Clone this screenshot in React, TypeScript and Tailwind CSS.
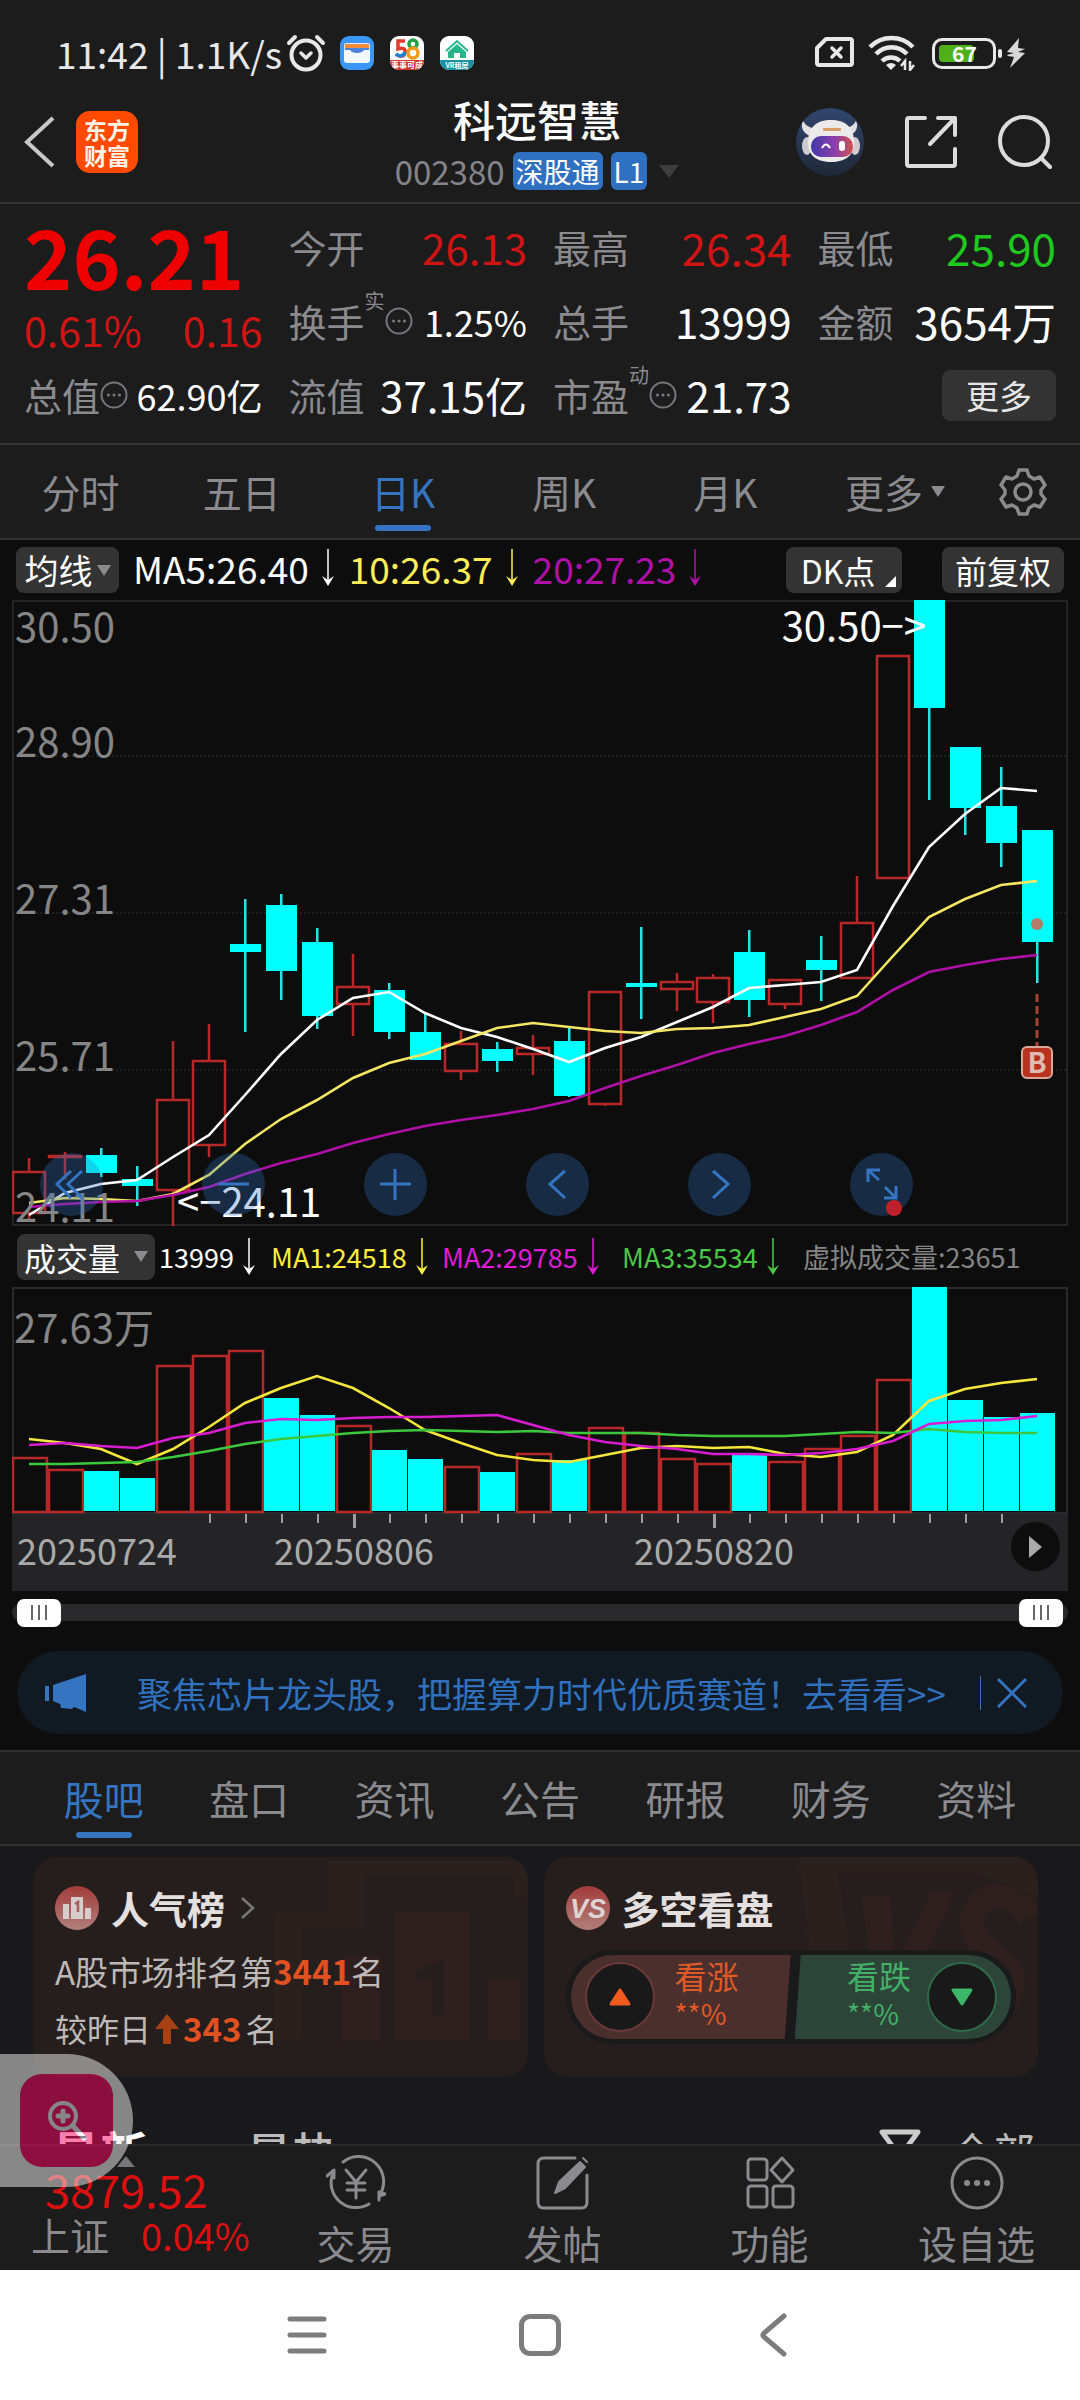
import type { ReactNode } from "react";

type Candle = [high: number, top: number, bottom: number, low: number, up: 0 | 1];

const STEP = 36;

const candles: Candle[] = [
  [558, 572, 613, 620, 1],
  [552, 556, 557, 579, 1],
  [548, 555, 573, 577, 0],
  [566, 579, 586, 606, 0],
  [441, 500, 590, 627, 1],
  [424, 461, 545, 557, 1],
  [299, 344, 352, 432, 0],
  [294, 305, 371, 400, 0],
  [328, 342, 416, 429, 0],
  [354, 387, 404, 436, 1],
  [383, 390, 432, 439, 0],
  [413, 432, 460, 460, 0],
  [431, 444, 471, 480, 1],
  [442, 449, 461, 472, 0],
  [435, 448, 454, 475, 1],
  [428, 441, 496, 497, 0],
  [392, 392, 504, 506, 1],
  [327, 383, 387, 419, 0],
  [373, 382, 389, 411, 1],
  [374, 378, 402, 423, 1],
  [330, 352, 400, 417, 0],
  [380, 380, 404, 409, 1],
  [336, 360, 370, 401, 0],
  [276, 323, 378, 378, 1],
  [56, 56, 278, 278, 1],
  [0, 0, 108, 200, 0],
  [147, 147, 208, 235, 0],
  [167, 206, 243, 267, 0],
  [230, 230, 342, 383, 0],
];

const ma5 = [615, 593, 584, 580, 557, 535, 495, 454, 420, 398, 392, 413, 428, 437, 449, 462, 448, 437, 422, 407, 388, 385, 382, 370, 306, 247, 214, 188, 191];
const ma10 = [603, 598, 599, 601, 594, 575, 544, 519, 500, 478, 463, 454, 441, 428, 423, 427, 431, 433, 429, 428, 425, 417, 409, 396, 356, 317, 299, 285, 281];
const ma20 = [607, 604, 602, 601, 595, 587, 574, 563, 554, 543, 534, 526, 520, 515, 509, 501, 488, 476, 465, 453, 444, 436, 425, 412, 390, 372, 365, 359, 355];

const volumeTops = [170, 182, 184, 191, 78, 68, 63, 111, 128, 138, 163, 172, 179, 185, 166, 173, 140, 145, 171, 176, 168, 174, 161, 148, 92, 0, 113, 130, 126];
const vma1 = [152, 156, 162, 177, 162, 140, 116, 101, 89, 101, 121, 143, 156, 168, 173, 175, 168, 161, 159, 161, 160, 167, 170, 165, 148, 114, 102, 96, 92];
const vma2 = [158, 156, 159, 161, 151, 146, 136, 132, 133, 131, 130, 130, 129, 128, 138, 148, 155, 159, 162, 167, 167, 168, 166, 162, 154, 137, 134, 133, 129];
const vma3 = [177, 177, 176, 175, 170, 164, 157, 152, 149, 146, 144, 143, 144, 145, 144, 146, 146, 146, 148, 149, 149, 149, 147, 145, 146, 142, 145, 146, 146];

// closed above the day before, although the candle itself fell
const gapUpDays = [6, 17, 22];

const center = (i: number) => 17 + i * STEP;
const toPoints = (values: number[]) => values.map((y, i) => `${center(i)},${y}`).join(" ");
const isUpVolume = (i: number) => candles[i][4] === 1 || gapUpDays.includes(i);

const StatusBar = () => (
  <div className="flex h-[94px] items-center justify-between pt-3 pl-[56px] pr-[54px]">
    <div className="flex items-center">
      <span className="text-[37px] leading-none text-[#e8e8e8]">11:42 | 1.1K/s</span>
      <svg viewBox="0 0 40 38" className="ml-1 h-[38px] w-10" fill="none" stroke="#e8e8e8" strokeWidth="4" strokeLinecap="round">
        <circle cx="20" cy="21" r="14.5" />
        <path d="M15 19l5 5 5-5" strokeLinejoin="round" strokeWidth="3.5" />
        <path d="M3 9l6-6M37 9l-6-6" />
      </svg>
      <svg viewBox="0 0 34 34" className="ml-[14px] size-[34px]">
        <rect width="34" height="34" rx="9" fill="#3a97f5" />
        <rect x="4" y="7" width="26" height="10" rx="2" fill="#d9e6f5" />
        <rect x="5" y="8" width="24" height="4" fill="#f08c3c" />
        <path d="M4 14h6c2 4 12 4 14 0h6v10a3 3 0 0 1-3 3H7a3 3 0 0 1-3-3z" fill="#f4f8ff" />
        <path d="M5 12h24v2h-5c-2 4-12 4-14 0H5z" fill="#4a83d8" />
      </svg>
      <svg viewBox="0 0 34 34" className="ml-4 size-[34px]">
        <clipPath id="r58"><rect width="34" height="34" rx="9" /></clipPath>
        <g clipPath="url(#r58)">
          <rect width="34" height="34" fill="#fff" />
          <path d="M15 5H8v8c5-2 8 0 7 4s-6 4-9 1" fill="none" stroke="#e23a2e" strokeWidth="3.5" />
          <path d="M6 18c3 3 8 2 9-2" fill="none" stroke="#1d82d2" strokeWidth="3.5" />
          <circle cx="23" cy="8" r="4" fill="none" stroke="#25a045" strokeWidth="3.5" />
          <circle cx="23" cy="17" r="5" fill="none" stroke="#f39a1e" strokeWidth="3.5" />
          <rect y="24" width="34" height="10" fill="#d8352b" />
          <text x="17" y="32" textAnchor="middle" fontSize="8" fontWeight="700" fill="#fff">事事可成</text>
        </g>
      </svg>
      <svg viewBox="0 0 34 34" className="ml-4 size-[34px]">
        <clipPath id="rvr"><rect width="34" height="34" rx="9" /></clipPath>
        <g clipPath="url(#rvr)">
          <rect width="34" height="34" fill="#fff" />
          <path d="M6 15L17 5l11 10" fill="none" stroke="#27b589" strokeWidth="2" />
          <path d="M17 8l9 8v6h-6v-5h-6v5H8v-6z" fill="#27b589" />
          <path d="M0 24h34v10H0z" fill="#1a92a5" />
          <text x="17" y="32" textAnchor="middle" fontSize="7" fontWeight="700" fill="#fff">VR租房</text>
        </g>
      </svg>
    </div>
    <div className="flex items-center">
      <svg viewBox="0 0 42 34" className="h-[34px] w-[42px]" fill="none" stroke="#e8e8e8" strokeWidth="4" strokeLinejoin="round">
        <path d="M12 3h24q2 0 2 2v22q0 2-2 2H5q-2 0-2-2V12z" />
        <path d="M18 12l9 9M27 12l-9 9" strokeLinecap="round" strokeWidth="3.5" />
      </svg>
      <svg viewBox="0 0 48 36" className="ml-3 h-9 w-12" fill="none" stroke="#e8e8e8" strokeWidth="4.5">
        <path d="M2 12a30 30 0 0 1 43 0M8 19a21 21 0 0 1 31 0M14 26a13 13 0 0 1 18 0" />
        <path d="M18 30a8 8 0 0 1 10 0l-5 5z" fill="#e8e8e8" stroke="none" />
        <path d="M37 35v-9l-4 5M42 26v9l4-5" strokeWidth="2.5" />
      </svg>
      <div className="ml-4 flex h-[31px] w-16 items-center rounded-[10px] border-[3px] border-[#e8e8e8] p-1">
        <div className="flex h-full w-[35px] items-center justify-center rounded-[4px] bg-[#4fb01a] pl-4 text-[21px] leading-none font-bold text-white">67</div>
      </div>
      <div className="ml-[2px] h-[9px] w-1 rounded-full bg-[#e8e8e8]" />
      <svg viewBox="0 0 20 30" className="ml-1 h-[30px] w-5" fill="#d8d8d8">
        <path d="M13 0L1 14l7 1-7 2 1 1 6 1-4 11L19 15l-7-1 7-3-7-1z" />
      </svg>
    </div>
  </div>
);

const Header = () => (
  <header className="grid h-[110px] grid-cols-[1fr_auto_1fr] items-center border-b-2 border-[#333] pl-[22px] pr-7">
    <div className="flex items-center gap-5 pb-3">
      <button aria-label="返回">
        <svg viewBox="0 0 34 52" className="h-[52px] w-[34px]" fill="none" stroke="#c8c8c8" strokeWidth="4">
          <path d="M31 2L5 26l26 24" />
        </svg>
      </button>
      <a href="#home" className="flex size-[62px] flex-col items-center justify-center rounded-[14px] bg-[#ff4a00] text-[23px] leading-[26px] font-bold text-[#fff3e8]">
        <span>东方</span>
        <span>财富</span>
      </a>
    </div>
    <div className="flex flex-col items-center gap-2 pb-3">
      <h1 className="text-[42px] leading-[50px] font-medium text-white">科远智慧</h1>
      <div className="flex items-center gap-2 leading-[38px]">
        <span className="text-[33px] text-[#84848a]">002380</span>
        <span className="rounded-[6px] bg-[#3070c0] px-[3px] text-[28px] text-white">深股通</span>
        <span className="rounded-[6px] bg-[#3070c0] px-[3px] text-[28px] text-white">L1</span>
        <span className="ml-1 h-0 w-0 border-x-[10px] border-t-[13px] border-x-transparent border-t-[#3d3d3d]" />
      </div>
    </div>
    <div className="flex items-center justify-end gap-10 pb-3">
      <button aria-label="助手">
        <svg viewBox="0 0 68 68" className="size-[68px]">
          <defs>
            <linearGradient id="face" x1="0" x2="1">
              <stop offset="0" stopColor="#4238a8" />
              <stop offset="0.55" stopColor="#8a3fae" />
              <stop offset="1" stopColor="#d2504e" />
            </linearGradient>
            <linearGradient id="sky" x1="0" x2="0" y1="0" y2="1">
              <stop offset="0" stopColor="#31466e" />
              <stop offset="1" stopColor="#1f2838" />
            </linearGradient>
          </defs>
          <circle cx="34" cy="34" r="34" fill="url(#sky)" />
          <path d="M7 13c-3 6 0 12 7 15l8-8c-7 1-12-2-15-7zM60 13c3 6 0 12-7 15l-8-8c7 1 12-2 15-7z" fill="#e3e0e2" />
          <ellipse cx="11" cy="38" rx="5" ry="9" fill="#cfcbd0" />
          <ellipse cx="59" cy="38" rx="5" ry="9" fill="#cfcbd0" />
          <path d="M12 34c0-15 9-22 23-22s23 7 23 22c0 14-9 20-23 20s-23-6-23-20z" fill="#ece9ea" />
          <rect x="27" y="20" width="18" height="3" rx="1" fill="#d99c6c" />
          <rect x="15" y="28" width="42" height="21" rx="10" fill="url(#face)" />
          <path d="M26 40q4-7 8 0" fill="none" stroke="#fff" strokeWidth="2" />
          <rect x="43" y="33" width="6" height="10" rx="3" fill="#fff" />
        </svg>
      </button>
      <button aria-label="分享">
        <svg viewBox="0 0 54 54" className="size-[54px]" fill="none" stroke="#dcdcdc" strokeWidth="4" strokeLinecap="round" strokeLinejoin="round">
          <path d="M21 3H5q-2 0-2 2v44q0 2 2 2h44q2 0 2-2V34" />
          <path d="M34 3h17v17M51 3L26 29" />
        </svg>
      </button>
      <button aria-label="搜索">
        <svg viewBox="0 0 54 54" className="size-[54px]" fill="none" stroke="#dcdcdc" strokeWidth="4" strokeLinecap="round">
          <circle cx="26" cy="26" r="24" />
          <path d="M43 43l9 9" />
        </svg>
      </button>
    </div>
  </header>
);

const InfoDots = () => (
  <svg viewBox="0 0 28 28" className="size-7 shrink-0" fill="#77777b">
    <circle cx="14" cy="14" r="12.5" fill="none" stroke="#77777b" strokeWidth="2" />
    <circle cx="8.5" cy="14" r="1.6" />
    <circle cx="14" cy="14" r="1.6" />
    <circle cx="19.5" cy="14" r="1.6" />
  </svg>
);

type StatProps = {
  label: string;
  note?: string;
  info?: boolean;
  value: string;
  tone?: string;
  size?: string;
};

const Stat = ({ label, note, info, value, tone = "text-white", size = "text-[42px]" }: StatProps) => (
  <div className="flex h-[74px] items-center justify-between whitespace-nowrap leading-none">
    <span className="flex items-center text-[38px] text-[#8a8a8f]">
      {label}
      {note && <sup className="relative -top-5 text-[20px] leading-none">{note}</sup>}
      {info && <InfoDots />}
    </span>
    <span className={`${size} ${tone}`}>{value}</span>
  </div>
);

const Quote = () => (
  <section className="grid h-[241px] grid-cols-4 grid-rows-[74px_74px_74px] gap-x-[26px] border-b-2 border-[#333] px-6 pt-[6px]">
    <div className="row-span-2 flex flex-col">
      <div className="flex h-[90px] items-center text-[82px] leading-none font-bold text-[#ee0000]">26.21</div>
      <div className="flex h-[58px] items-center justify-between text-[41px] leading-none text-[#d01414]">
        <span>0.61%</span>
        <span>0.16</span>
      </div>
    </div>
    <Stat label="今开" value="26.13" tone="text-[#d01414]" />
    <Stat label="最高" value="26.34" tone="text-[#d01414]" size="text-[44px]" />
    <Stat label="最低" value="25.90" tone="text-[#1fc81f]" size="text-[44px]" />
    <Stat label="换手" note="实" info value="1.25%" size="text-[36px]" />
    <Stat label="总手" value="13999" />
    <Stat label="金额" value="3654万" size="text-[44px]" />
    <Stat label="总值" info value="62.90亿" size="text-[36px]" />
    <Stat label="流值" value="37.15亿" />
    <Stat label="市盈" note="动" info value="21.73" />
    <div className="flex h-[74px] items-center justify-end">
      <button className="h-[51px] w-[114px] rounded-lg bg-[#333] text-[33px] leading-none text-[#e6e6e6]">更多</button>
    </div>
  </section>
);

const periods = ["分时", "五日", "日K", "周K", "月K"];

const PeriodTabs = () => (
  <nav className="flex h-[95px] items-center border-b-2 border-[#333] pr-[18px] text-[39px] leading-none text-[#8a8a8f]">
    {periods.map((name) => (
      <button key={name} className={name === "日K" ? "relative h-full flex-1 text-[#3474c0]" : "relative h-full flex-1"}>
        {name}
        {name === "日K" && <span className="absolute bottom-[7px] left-1/2 h-[6px] w-14 -translate-x-1/2 rounded-full bg-[#3474c0]" />}
      </button>
    ))}
    <button className="flex h-full w-[178px] items-center justify-center gap-2">
      更多
      <span className="h-0 w-0 border-x-[7px] border-t-[11px] border-x-transparent border-t-[#8a8a8f]" />
    </button>
    <button aria-label="设置" className="flex h-full w-[78px] items-center justify-center">
      <svg viewBox="0 0 48 48" className="size-12" fill="none" stroke="#8a8a8f" strokeWidth="3.5" strokeLinejoin="round">
        <path d="M20 2h8l2 6 5 3 6-2 5 8-4 5v4l4 5-5 8-6-2-5 3-2 6h-8l-2-6-5-3-6 2-5-8 4-5v-4l-4-5 5-8 6 2 5-3z" />
        <circle cx="24" cy="24" r="8" />
      </svg>
    </button>
  </nav>
);

const DownArrow = () => (
  <svg viewBox="0 0 14 38" className="h-[38px] w-[14px] shrink-0">
    <path d="M7 0v32" stroke="currentColor" strokeWidth="1.5" fill="none" />
    <path d="M1 27l6 10 6-10-6 4z" fill="currentColor" />
  </svg>
);

const MaBar = () => (
  <div className="flex h-[60px] items-center justify-between px-4 text-[34px] leading-none whitespace-nowrap text-white">
    <div className="flex items-center gap-[14px]">
      <button className="flex h-[46px] w-[103px] items-center justify-center gap-1 rounded-lg bg-[#333]">
        均线
        <span className="h-0 w-0 border-x-[7px] border-t-[11px] border-x-transparent border-t-[#8a8a8f]" />
      </button>
      <span className="flex items-center gap-3 pb-1 text-[37px]">MA5:26.40<DownArrow /></span>
      <span className="flex items-center gap-3 pb-1 text-[37px] text-[#ffee58]">10:26.37<DownArrow /></span>
      <span className="flex items-center gap-3 pb-1 text-[37px] text-[#b010a8]">20:27.23<DownArrow /></span>
    </div>
    <div className="flex items-center gap-10">
      <button className="relative h-[46px] w-[116px] rounded-lg bg-[#333] pr-3 text-[32px]">
        DK点
        <span className="absolute right-[6px] bottom-[6px] h-0 w-0 border-b-[11px] border-l-[11px] border-b-white border-l-transparent" />
      </button>
      <button className="h-[46px] w-[122px] rounded-lg bg-[#333] text-[32px]">前复权</button>
    </div>
  </div>
);

const RoundButton = ({ label, children }: { label: string; children: ReactNode }) => (
  <button aria-label={label} className="relative size-[63px] rounded-full bg-[#2e74c4]/30">
    <svg viewBox="0 0 63 63" className="size-full" fill="none" stroke="#3474c0" strokeWidth="3">
      {children}
    </svg>
  </button>
);

const PriceChart = () => (
  <div className="relative mx-3">
    <svg viewBox="0 0 1056 626" className="block w-full" fontSize="40">
      <path d="M1 1V625H1055V1z" fill="none" stroke="#242424" strokeWidth="2" />
      <path d="M0 156H1055M0 313H1055M0 470H1055" stroke="#333" strokeWidth="1" strokeDasharray="2 2" />
      {candles.map(([high, top, bottom, low, up], i) =>
        up ? (
          <g key={i} stroke="#b82828" strokeWidth="2.5" fill="none">
            <path d={`M${center(i)} ${high}V${top}M${center(i)} ${bottom}V${low}`} />
            <rect x={center(i) - 16} y={top} width="32" height={bottom - top} />
          </g>
        ) : (
          <g key={i} fill="#00ffff">
            <rect x={center(i) - 1} y={high} width="2.5" height={low - high} fill="#28e4e4" />
            <rect x={center(i) - 15} y={top} width="31" height={bottom - top} />
          </g>
        )
      )}
      <g fill="none" strokeWidth="2.6">
        <polyline points={toPoints(ma5)} stroke="#fff" />
        <polyline points={toPoints(ma10)} stroke="#f5e663" />
        <polyline points={toPoints(ma20)} stroke="#b010a8" />
      </g>
      <g fill="#858585">
        <text x="3" y="42">30.50</text>
        <text x="3" y="157">28.90</text>
        <text x="3" y="314">27.31</text>
        <text x="3" y="471">25.71</text>
        <text x="3" y="622">24.11</text>
      </g>
      <g fill="#fff">
        <text x="165" y="617">&lt;−24.11</text>
        <text x="914" y="41" textAnchor="end">30.50−&gt;</text>
      </g>
      <circle cx="1025" cy="324" r="6" fill="#b57a68" />
      <path d="M1025 394V446" stroke="#a84030" strokeWidth="3" strokeDasharray="8 4" />
      <rect x="1010" y="447" width="30" height="31" rx="5" fill="#b83220" stroke="#dba898" strokeWidth="2" />
      <text x="1025" y="473" textAnchor="middle" fontSize="28" fontWeight="700" fill="#e0bab0">B</text>
    </svg>
    <div className="absolute bottom-[10px] left-7 flex w-[873px] justify-between">
      <RoundButton label="最左"><path d="M31 18L17 31l14 14M42 18L28 31l14 14" /></RoundButton>
      <RoundButton label="缩小"><path d="M16 31h31" /></RoundButton>
      <RoundButton label="放大"><path d="M16 31h31M31 16v31" /></RoundButton>
      <RoundButton label="左移"><path d="M39 18L24 31l15 14" /></RoundButton>
      <RoundButton label="右移"><path d="M25 18l15 13-15 14" /></RoundButton>
      <RoundButton label="全屏">
        <path d="M30 17H18v12M18 17l11 10M34 45h12V33M46 45L35 34" />
        <circle cx="44" cy="55" r="8" fill="#c0202c" stroke="none" />
      </RoundButton>
    </div>
  </div>
);

const VolumeBar = () => (
  <div className="flex h-[61px] items-center pl-[17px] text-[27px] leading-none whitespace-nowrap">
    <button className="flex h-[46px] w-[138px] items-center justify-center gap-[14px] rounded-lg bg-[#333] text-[32px] text-white">
      成交量
      <span className="h-0 w-0 border-x-[7px] border-t-[11px] border-x-transparent border-t-[#8a8a8f]" />
    </button>
    <span className="ml-1 flex w-[112px] items-center gap-2 text-white">13999<DownArrow /></span>
    <span className="flex w-[171px] items-center gap-2 text-[#ffee3c]">MA1:24518<DownArrow /></span>
    <span className="flex w-[180px] items-center gap-2 text-[#e01cd8]">MA2:29785<DownArrow /></span>
    <span className="flex w-[181px] items-center gap-2 text-[#4cc848]">MA3:35534<DownArrow /></span>
    <span className="text-[#858585]">虚拟成交量:23651</span>
  </div>
);

const VolumeChart = () => (
  <div className="relative mx-3">
    <svg viewBox="0 0 1056 304" className="block w-full">
      <path d="M1 1H1055V226H1z" fill="none" stroke="#2a2a2a" strokeWidth="2" />
      {volumeTops.map((top, i) =>
        isUpVolume(i) ? (
          <rect key={i} x={STEP * i + 1} y={top + 1} width="34" height={224 - top} fill="none" stroke="#b82828" strokeWidth="2.5" />
        ) : (
          <rect key={i} x={STEP * i} y={top} width="35" height={224 - top} fill="#00ffff" />
        )
      )}
      <g fill="none" strokeWidth="2.6">
        <polyline points={toPoints(vma1)} stroke="#f5e63c" />
        <polyline points={toPoints(vma3)} stroke="#3cc83c" />
        <polyline points={toPoints(vma2)} stroke="#d81cd0" />
      </g>
      <text x="2" y="56" fontSize="40" fill="#858585">27.63万</text>
      <rect y="227" width="1056" height="77" fill="#242426" />
      {candles.map((_, i) =>
        i < 5 || i > 27 ? null : (
          <rect key={i} x={center(i)} y="227" width={i === 9 || i === 19 ? 3 : 2} height={i === 9 || i === 19 ? 14 : 9} fill="#a0a0a0" />
        )
      )}
      <g fontSize="36" fill="#aaa">
        <text x="5" y="278">20250724</text>
        <text x="342" y="278" textAnchor="middle">20250806</text>
        <text x="702" y="278" textAnchor="middle">20250820</text>
      </g>
    </svg>
    <button aria-label="播放" className="absolute right-2 bottom-5 flex size-[49px] items-center justify-center rounded-full bg-[#0d0d0d]">
      <span className="h-0 w-0 border-y-[11px] border-l-[13px] border-y-transparent border-l-[#aaa]" />
    </button>
  </div>
);

const thumbClass =
  "pointer-events-none absolute inset-x-[5px] top-1/2 h-7 -translate-y-1/2 appearance-none bg-transparent [&::-webkit-slider-thumb]:pointer-events-auto [&::-webkit-slider-thumb]:h-7 [&::-webkit-slider-thumb]:w-11 [&::-webkit-slider-thumb]:appearance-none [&::-webkit-slider-thumb]:rounded-[7px] [&::-webkit-slider-thumb]:bg-white [&::-webkit-slider-thumb]:bg-[repeating-linear-gradient(90deg,#666_0_2px,#fff_2px_7px)] [&::-webkit-slider-thumb]:bg-[length:16px_15px] [&::-webkit-slider-thumb]:bg-center [&::-webkit-slider-thumb]:bg-no-repeat";

const RangeBar = () => (
  <div className="px-3 pt-[13px] pb-[30px]">
    <div className="relative h-[17px] rounded-full bg-[#2a2a2c]">
      <input type="range" aria-label="起始日期" defaultValue={0} className={thumbClass} />
      <input type="range" aria-label="结束日期" defaultValue={100} className={thumbClass} />
    </div>
  </div>
);

const Banner = () => (
  <div className="mx-[17px] mb-4 flex h-[83px] items-center rounded-full bg-[#111922] pl-7 pr-9 text-[#3070bc]">
    <svg viewBox="0 0 42 38" className="h-[38px] w-[42px] shrink-0" fill="#3474c0">
      <path d="M0 12h4v15H0zM8 11L41 0v38l-12-5-2 2-11-1-1-4-7-3z" />
    </svg>
    <a href="#promo" className="ml-[50px] text-[35px] leading-none whitespace-nowrap">聚焦芯片龙头股，把握算力时代优质赛道！去看看&gt;&gt;</a>
    <span className="ml-auto h-[34px] w-px bg-[#3070bc]" />
    <button aria-label="关闭" className="ml-4">
      <svg viewBox="0 0 30 30" className="size-[30px]" fill="none" stroke="#3474c0" strokeWidth="3">
        <path d="M1 1l28 28M29 1L1 29" />
      </svg>
    </button>
  </div>
);

const sections = ["股吧", "盘口", "资讯", "公告", "研报", "财务", "资料"];

const SectionTabs = () => (
  <nav className="grid h-24 grid-cols-7 border-y-2 border-[#303030] bg-[#1c1c1c] px-[31px] text-[40px] leading-none text-[#8a8a8f]">
    {sections.map((name) => (
      <button key={name} className={name === "股吧" ? "relative text-[#3474c0]" : "relative"}>
        {name}
        {name === "股吧" && <span className="absolute bottom-[6px] left-1/2 h-[6px] w-14 -translate-x-1/2 rounded-full bg-[#3474c0]" />}
      </button>
    ))}
  </nav>
);

const RankCard = () => (
  <div className="relative h-[220px] overflow-hidden rounded-[24px] bg-[#261e1d] pt-6 pl-[22px] text-[#bdb9b8]">
    <svg viewBox="0 0 260 200" className="absolute right-0 bottom-4 h-[200px] w-[260px]">
      <path d="M6 52h54V0h200v36H246V14H96v52H34v112H6z" fill="#2a201e" />
      <path d="M126 50h76v130h-76zM74 95h38v85H74zM220 118h32v62h-32z" fill="#2f201f" />
      <path d="M148 110l28-12v56h-12v-38l-16 6z" fill="#261e1d" />
    </svg>
    <div className="relative flex items-center">
      <svg viewBox="0 0 44 44" className="size-11">
        <linearGradient id="badge" x1="0" x2="0" y1="0" y2="1">
          <stop offset="0" stopColor="#a33c3a" />
          <stop offset="1" stopColor="#b0807c" />
        </linearGradient>
        <circle cx="22" cy="22" r="22" fill="url(#badge)" />
        <path d="M8 18h6v15H8zM16 11h12v22H16zM30 22h6v11h-6z" fill="#d6cccb" />
        <path d="M20 18l3-2v10" fill="none" stroke="#a85a56" strokeWidth="2.5" />
      </svg>
      <h2 className="ml-3 text-[38px] leading-[54px] font-bold text-[#e4e0e0]">人气榜</h2>
      <svg viewBox="0 0 14 22" className="ml-4 h-[22px] w-[14px]" fill="none" stroke="#777" strokeWidth="2.5">
        <path d="M1 1l11 10L1 21" />
      </svg>
    </div>
    <p className="relative mt-2 text-[33px] leading-[57px]">
      A股市场排名第<b className="text-[#e05020]">3441</b>名
    </p>
    <p className="relative flex items-center text-[32px] leading-[57px]">
      较昨日
      <svg viewBox="0 0 24 30" className="mx-1 h-[30px] w-6" fill="#a84016">
        <path d="M12 0l12 15h-8v15H8V15H0z" />
      </svg>
      <b className="mr-1 text-[33px] text-[#e05020]">343</b> 名
    </p>
  </div>
);

const VersusCard = () => (
  <div className="relative h-[220px] overflow-hidden rounded-[24px] bg-[#261e1d] px-[22px] pt-6">
    <svg viewBox="0 0 240 210" className="absolute top-0 right-0 h-[210px] w-[240px]">
      <path d="M0 0h240v40l-60-24-40 0H40l12 80H12z" fill="#2a201e" />
      <path d="M64 40h28l6 70 34-74h24l-50 110H76z" fill="#2f201f" />
      <path d="M232 60c-20-34-60-22-58 8s46 30 40 62-40 18-54 0" fill="none" stroke="#2f201f" strokeWidth="24" />
    </svg>
    <div className="relative flex items-center">
      <svg viewBox="0 0 44 44" className="size-11">
        <circle cx="22" cy="22" r="22" fill="url(#badge)" />
        <text x="22" y="32" textAnchor="middle" fontSize="27" fontWeight="700" fontStyle="italic" fontFamily="Liberation Sans, sans-serif" fill="#ded4d3">VS</text>
      </svg>
      <h2 className="ml-3 text-[38px] leading-[54px] font-bold text-[#e4e0e0]">多空看盘</h2>
    </div>
    <div className="relative mt-[15px] flex h-[94px] rounded-full border-[5px] border-[#1a1a1b] bg-[#1a1a1b] leading-none">
      <button className="flex w-1/2 items-center rounded-l-full bg-[#4a2f2d] pl-[14px] text-[#e05a28] [clip-path:polygon(0_0,100%_0,calc(100%-6px)_100%,0_100%)]">
        <span className="flex size-[70px] items-center justify-center rounded-full border-2 border-[#6a3a38] bg-[#191919]">
          <svg viewBox="0 0 22 18" className="h-[18px] w-[22px]" fill="#f05a1c" stroke="#f05a1c" strokeWidth="3" strokeLinejoin="round"><path d="M11 2l9 14H2z" /></svg>
        </span>
        <span className="ml-5 flex flex-col gap-2 pb-2 text-left"><span className="text-[32px]">看涨</span><span className="text-[28px]">**%</span></span>
      </button>
      <button className="ml-1 flex flex-1 items-center justify-end rounded-r-full bg-[#2c4538] pr-[14px] text-[#42b066] [clip-path:polygon(6px_0,100%_0,100%_100%,0_100%)]">
        <span className="mr-4 flex flex-col gap-2 pb-2 text-left"><span className="text-[32px]">看跌</span><span className="text-[28px]">**%</span></span>
        <span className="flex size-[70px] items-center justify-center rounded-full border-2 border-[#2f6a48] bg-[#191919]">
          <svg viewBox="0 0 22 18" className="h-[18px] w-[22px]" fill="#3cb868" stroke="#3cb868" strokeWidth="3" strokeLinejoin="round"><path d="M2 2h18l-9 14z" /></svg>
        </span>
      </button>
    </div>
  </div>
);

const Feed = () => (
  <section className="h-[298px] overflow-hidden bg-[#19191b] pt-[11px]">
    <div className="grid grid-cols-2 gap-4 pl-[33px] pr-[42px]">
      <RankCard />
      <VersusCard />
    </div>
    <div className="mt-11 flex items-start pl-[52px] pr-[45px] leading-[60px]">
      <span className="text-[48px] font-bold text-white">最新</span>
      <span className="ml-[98px] text-[46px] font-medium text-[#bbb]">最热</span>
      <svg viewBox="0 0 42 44" className="mt-2 ml-auto h-11 w-[42px]" fill="none" stroke="#ccc" strokeWidth="5" strokeLinejoin="round">
        <path d="M3 3h36L25 22v18l-8-5V22z" />
      </svg>
      <span className="ml-[30px] text-[42px] text-[#bbb]">全部</span>
    </div>
  </section>
);

const NavItem = ({ label, children }: { label: string; children: ReactNode }) => (
  <button className="flex flex-1 flex-col items-center gap-[9px] pt-[9px]">
    <svg viewBox="0 0 60 56" className="h-14 w-[60px]" fill="none" stroke="#8a8a8f" strokeWidth="3" strokeLinecap="round" strokeLinejoin="round">
      {children}
    </svg>
    <span className="text-[39px] leading-[44px]">{label}</span>
  </button>
);

const BottomNav = () => (
  <footer className="relative flex h-[126px] border-t-2 border-[#2a2a2a] bg-[#1c1c1c] text-[#8a8a8f]">
    <a href="#index" className="relative w-[252px] leading-none whitespace-nowrap">
      <span className="absolute top-[10px] left-[117px] h-0 w-0 border-x-[9px] border-b-[11px] border-x-transparent border-b-[#77777b]" />
      <span className="block pt-5 pl-[45px] text-[45px] text-[#dc1010]">3879.52</span>
      <span className="flex items-center gap-8 pt-1 pl-[31px] text-[39px]">
        上证<span className="text-[38px] text-[#dc1010]">0.04%</span>
      </span>
    </a>
    <NavItem label="交易">
      <path d="M17 7a25 25 0 0 1 36 34M43 49A25 25 0 0 1 7 18M1 21l7-6v8M53 41l6-2-6-2v8" />
      <path d="M20 15l10 12 10-12M21 28h18M21 35h18M30 27v16" />
    </NavItem>
    <NavItem label="发帖">
      <path d="M42 3H11q-6 0-6 6v38q0 6 6 6h37q6 0 6-6V20" />
      <path d="M22 38l4-11L47 7l5 5-20 21zM50 3l4 4" fill="#8a8a8f" strokeWidth="2" />
    </NavItem>
    <NavItem label="功能">
      <rect x="8" y="4" width="19" height="21" rx="3" />
      <path d="M42 3l11 12-11 12-11-12z" />
      <rect x="8" y="31" width="19" height="21" rx="3" />
      <rect x="33" y="31" width="20" height="21" rx="3" />
    </NavItem>
    <NavItem label="设自选">
      <circle cx="30" cy="28" r="25" />
      <path d="M20 28h.1M30 28h.1M40 28h.1" strokeWidth="6" />
    </NavItem>
    <button aria-label="放大镜" className="absolute -top-[92px] left-0 flex size-[133px] items-center rounded-r-full bg-[#f2f2f2] pl-5 opacity-50">
      <span className="flex size-[93px] items-center justify-center rounded-[22px] bg-[#ff0462]">
        <svg viewBox="0 0 40 42" className="h-[42px] w-10" fill="none" stroke="#f2f2f2" strokeWidth="4" strokeLinecap="round">
          <circle cx="16" cy="16" r="13" />
          <path d="M26 26l11 12M16 11v10M11 16h10" strokeWidth="5" />
        </svg>
      </span>
    </button>
  </footer>
);

const SystemNav = () => (
  <div className="flex h-[130px] items-center justify-center bg-white">
    <div className="flex w-[506px] items-center justify-between">
      <button aria-label="菜单">
        <svg viewBox="0 0 40 40" className="size-10" stroke="#7c7c7c" strokeWidth="5" strokeLinecap="round"><path d="M3 4h34M3 20h34M3 36h34" /></svg>
      </button>
      <button aria-label="主页" className="size-[42px] rounded-[11px] border-[5px] border-[#7c7c7c]" />
      <button aria-label="返回" className="flex w-10 justify-center">
        <svg viewBox="0 0 28 44" className="h-11 w-7" fill="none" stroke="#7c7c7c" strokeWidth="5" strokeLinecap="round"><path d="M25 3L5 20q-2 2 0 4l20 17" /></svg>
      </button>
    </div>
  </div>
);

const App = () => {
  return (
    <div className="overflow-hidden bg-[#0d0d0d] font-['Noto_Sans_CJK_SC',sans-serif]">
      <div className="bg-[#1c1c1c]">
        <StatusBar />
        <Header />
        <Quote />
        <PeriodTabs />
      </div>
      <MaBar />
      <PriceChart />
      <VolumeBar />
      <VolumeChart />
      <RangeBar />
      <Banner />
      <SectionTabs />
      <Feed />
      <BottomNav />
      <SystemNav />
    </div>
  );
};

export default App;
